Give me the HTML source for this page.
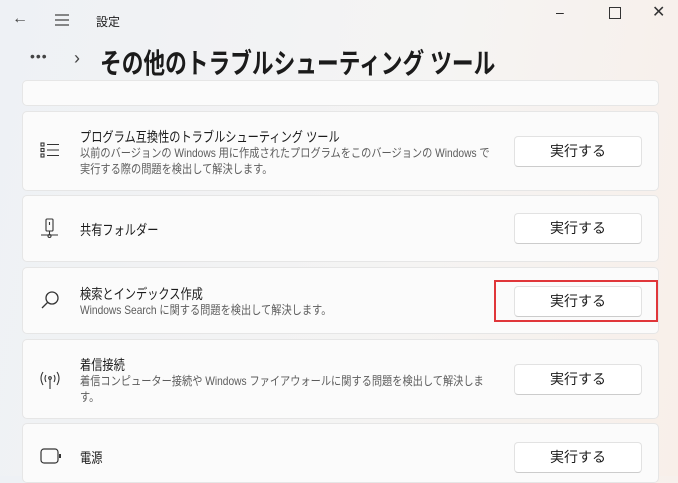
<html><head><style>
body{margin:0;width:678px;height:476px;overflow:hidden;background:linear-gradient(100deg,#eef1f5 0%,#f5f4f3 60%,#f8efe9 100%);font-family:"Liberation Sans","Noto Sans CJK JP",sans-serif;color:#1b1b1b;position:relative}
.a{position:absolute}
.card{position:absolute;left:22px;width:637px;background:#fbfbfb;border:1px solid #e6e6e6;border-radius:5px;box-sizing:border-box}
.btn{position:absolute;left:514px;width:128px;height:31px;background:#fff;border:1px solid #e2e2e2;border-bottom-color:#ccc;border-radius:4px;box-sizing:border-box;font-size:14px;text-align:center;line-height:29px}
.t{position:absolute;left:80px;font-size:14px;transform:scaleX(0.8);transform-origin:left;white-space:nowrap}
.d{position:absolute;left:80px;font-size:12px;color:#5c5c5c;line-height:16px;width:486px;transform:scaleX(0.85);transform-origin:left top}
</style></head><body>
<div class="a" style="left:12px;top:10px;font-size:16px;color:#444">←</div>
<svg class="a" style="left:54px;top:14px" width="16" height="12"><path d="M1 1H15M1 6H15M1 11H15" stroke="#444" stroke-width="1.2"/></svg>
<div class="a" style="left:96px;top:13px;font-size:12px">設定</div>
<div class="a" style="left:556px;top:4px;font-size:14px">–</div>
<div class="a" style="left:609px;top:7px;width:10px;height:10px;border:1px solid #333"></div>
<div class="a" style="left:652px;top:2px;font-size:16px;color:#333">✕</div>
<div class="a" style="left:30px;top:48px;font-size:14px;letter-spacing:1px;color:#444">•••</div>
<div class="a" style="left:74px;top:48px;font-size:18px;color:#444">›</div>
<div class="a" style="left:100px;top:42px;font-size:28px;font-weight:bold;white-space:nowrap;transform:scaleX(0.775);transform-origin:left">その他のトラブルシューティング ツール</div>
<div class="card" style="top:80px;height:26px"></div>
<div class="card" style="top:111px;height:80px"></div>
<svg class="a" style="left:40px;top:142px" width="20" height="16"><g stroke="#333" fill="none" stroke-width="1.1"><rect x="1" y="1" width="3" height="3"/><rect x="1" y="6.5" width="3" height="3"/><rect x="1" y="12" width="3" height="3"/><path d="M7 2.5H19M7 8H19M7 13.5H19"/></g></svg>
<div class="t" style="top:127px">プログラム互換性のトラブルシューティング ツール</div>
<div class="d" style="top:145px">以前のバージョンの Windows 用に作成されたプログラムをこのバージョンの Windows で実行する際の問題を検出して解決します。</div>
<div class="btn" style="top:136px">実行する</div>
<div class="card" style="top:195px;height:67px"></div>
<svg class="a" style="left:40px;top:218px" width="20" height="22"><g stroke="#333" fill="none" stroke-width="1.1"><rect x="6" y="1" width="7" height="12" rx="1"/><path d="M9.5 4V7M9.5 13V17M1 17H18"/><circle cx="9.5" cy="18" r="1.5"/></g></svg>
<div class="t" style="top:220px">共有フォルダー</div>
<div class="btn" style="top:213px">実行する</div>
<div class="card" style="top:267px;height:67px"></div>
<svg class="a" style="left:40px;top:290px" width="20" height="20"><g stroke="#333" fill="none" stroke-width="1.3"><circle cx="12" cy="8" r="6"/><path d="M7.5 12.5L2 18"/></g></svg>
<div class="t" style="top:284px">検索とインデックス作成</div>
<div class="d" style="top:302px">Windows Search に関する問題を検出して解決します。</div>
<div class="btn" style="top:286px">実行する</div>
<div class="a" style="left:494px;top:280px;width:164px;height:42px;border:2px solid #e0363a;box-sizing:border-box"></div>
<div class="card" style="top:339px;height:80px"></div>
<svg class="a" style="left:39px;top:370px" width="22" height="20"><g stroke="#333" fill="none" stroke-width="1.1"><path d="M4 2Q0 8 4 15M18 2Q22 8 18 15M7 5Q5 8 7 12M15 5Q17 8 15 12M11 9V19"/><circle cx="11" cy="8" r="1.3"/></g></svg>
<div class="t" style="top:355px">着信接続</div>
<div class="d" style="top:373px">着信コンピューター接続や Windows ファイアウォールに関する問題を検出して解決しま<br>す。</div>
<div class="btn" style="top:364px">実行する</div>
<div class="card" style="top:423px;height:60px"></div>
<svg class="a" style="left:40px;top:448px" width="22" height="16"><g stroke="#333" fill="none" stroke-width="1.2"><rect x="1" y="1" width="17" height="14" rx="3"/><path d="M20 6V10" stroke-width="2"/></g></svg>
<div class="t" style="top:448px">電源</div>
<div class="btn" style="top:442px">実行する</div>
</body></html>
